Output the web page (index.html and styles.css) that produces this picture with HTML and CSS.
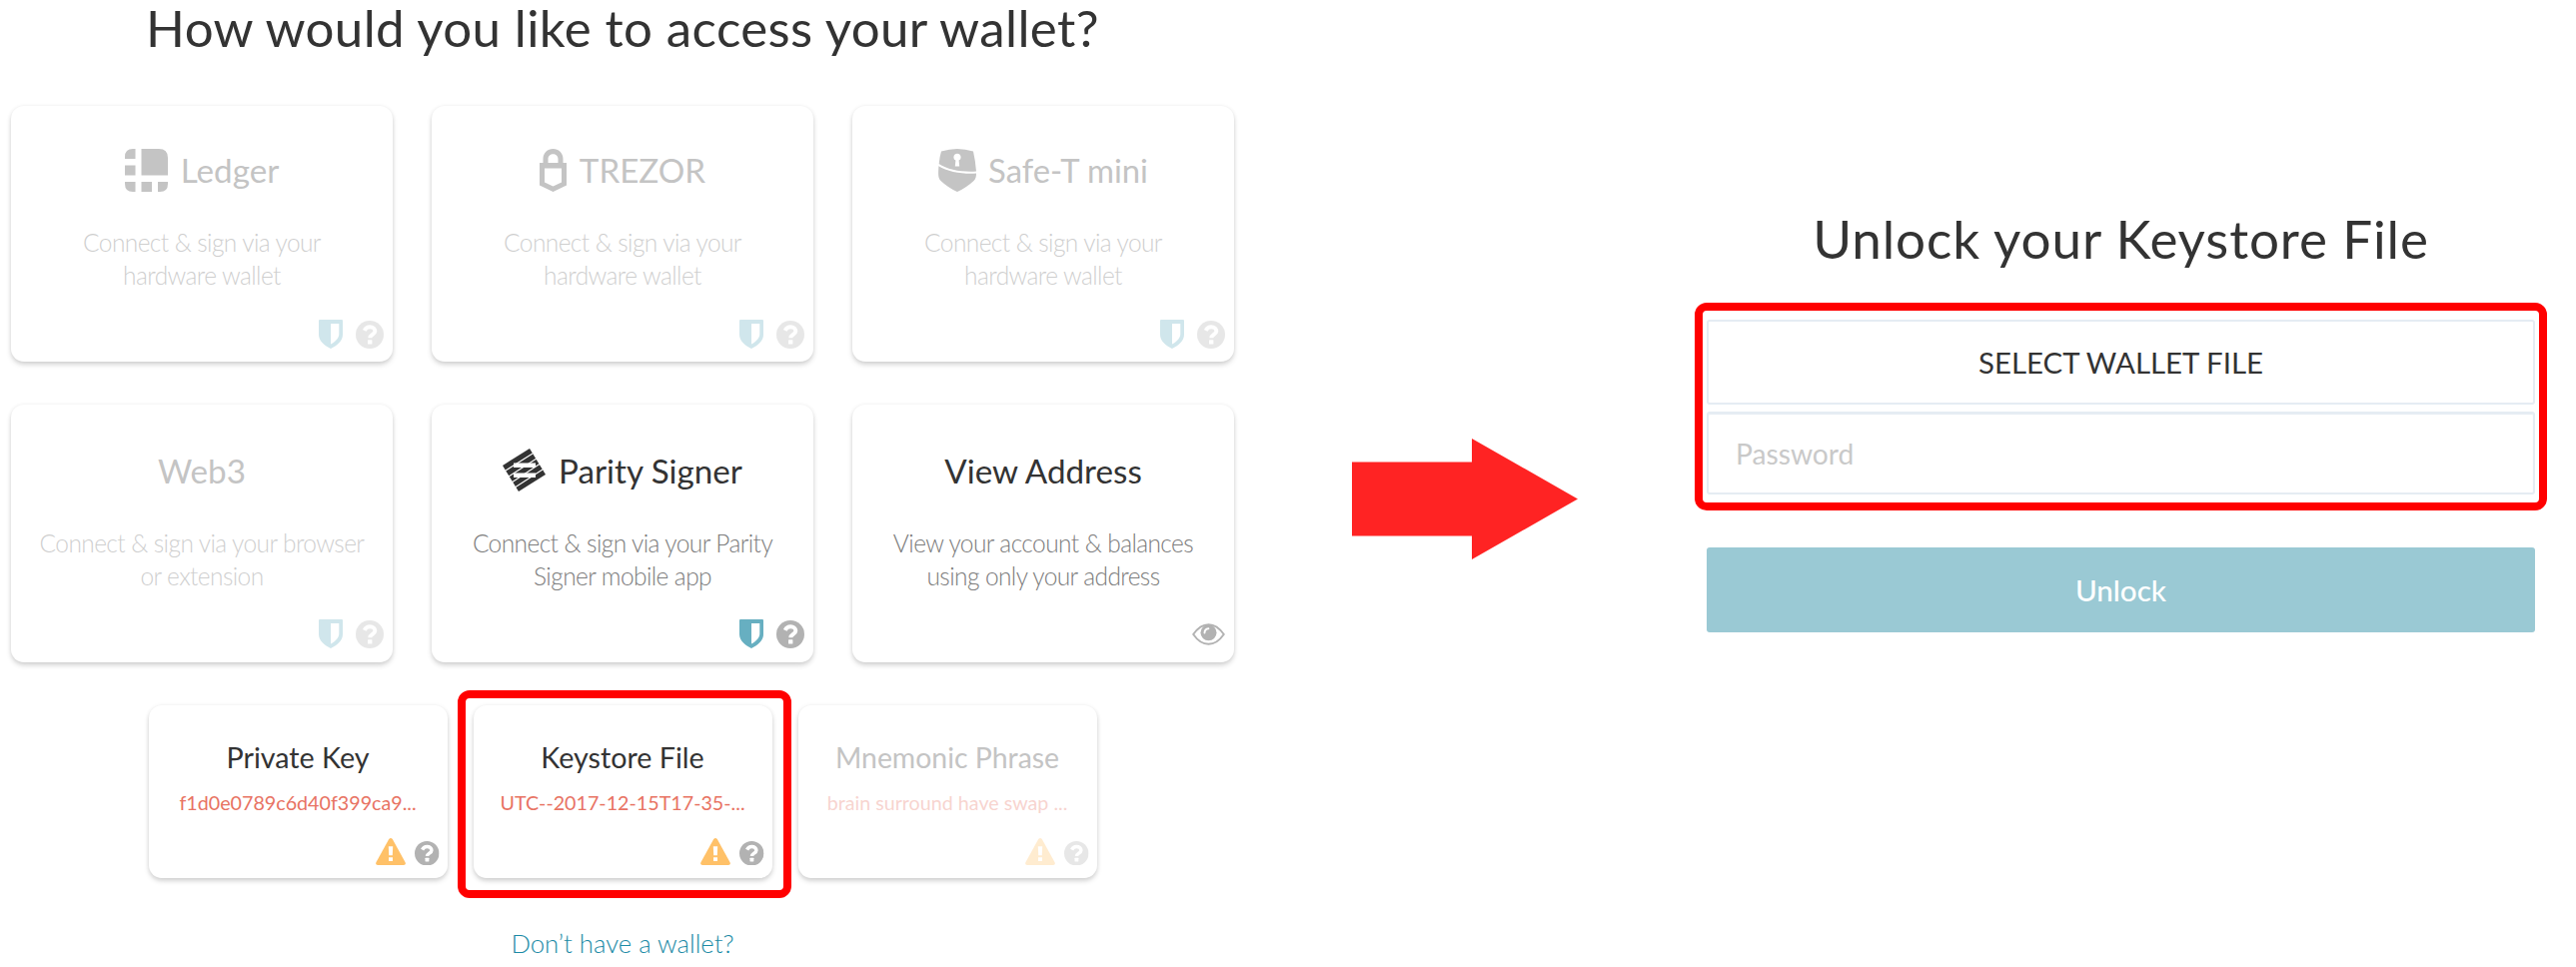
FILE: index.html
```html
<!DOCTYPE html>
<html lang="en">
<head>
<meta charset="utf-8">
<title>Access your wallet</title>
<link rel="stylesheet" href="styles.css">
</head>
<body>
<svg class="defs" aria-hidden="true">
  <symbol id="shield" viewBox="0 0 24 29"><path fill-rule="evenodd" d="M1 0H23Q24 0 24 1V15C24 21.500 18 26 12 29C6 26 0 21.500 0 15V1Q0 0 1 0ZM12 4V24.500C16 22.500 20.300 18.500 20.300 14.500V4Z"/></symbol>
  <symbol id="help" viewBox="0 0 28 28"><circle cx="14" cy="14" r="14"/><path d="M8.700 9.800C10 7.300 11.800 6.300 14.200 6.300C17.200 6.300 19.300 8 19.300 10.500C19.300 13.800 14.300 14 14.300 17.200" fill="none" stroke="#fff" stroke-width="4"/><rect x="12" y="19.200" width="4.400" height="4.200" rx=".5" fill="#fff"/></symbol>
  <symbol id="warn" viewBox="0 0 30 27"><path d="M13.200 1Q15 -1 16.800 1L29.600 24.300Q30.500 27 28 27H2Q-.5 27 .4 24.300Z"/><path d="M12.800 8.200h4.400l-.4 9h-3.600zM13 19.200h4v3.800h-4z" fill="#fff"/></symbol>
  <symbol id="eye" viewBox="0 0 33 22"><path d="M1.200 11Q8 1.200 16.500 1.200T31.800 11Q25 20.800 16.500 20.800T1.200 11Z" fill="none" stroke="currentColor" stroke-width="1.900"/><circle cx="16.500" cy="9.300" r="8"/><path d="M12.500 9.500Q12.700 5.600 16.400 5.300" fill="none" stroke="#fff" stroke-width="1.900" stroke-linecap="round"/></symbol>
</svg>
<main class="page">
  <section class="access">
    <h1 class="access-title">How would you like to access your wallet?</h1>
    <div class="row row-large">
      <article class="card disabled">
        <h2 class="card-title"><svg width="43" height="43" viewBox="0 0 43 43"><path d="M10.500 0V10H0V8Q0 0 8 0ZM16.500 0H34Q43 0 43 9V26.500H16.500ZM0 16.500H10.500V26.500H0ZM0 33H10.500V43H8Q0 43 0 35ZM16.500 33H27V43H16.500ZM33 33H43V35Q43 43 35 43H33Z"/></svg>Ledger</h2>
        <p class="card-text">Connect &amp; sign via your<br>hardware wallet</p>
        <div class="icons"><svg class="shield"><use href="#shield"/></svg><svg class="help"><use href="#help"/></svg></div>
      </article>
      <article class="card disabled">
        <h2 class="card-title"><svg width="27" height="43" viewBox="0 0 27 43"><path fill-rule="evenodd" d="M3.500 14V10C3.500 4 8 0 13.500 0S23.500 4 23.500 10V14H27V36.500L13.500 43L0 36.500V14ZM8.500 14H18.500V10C18.500 3.500 8.500 3.500 8.500 10ZM5 19.500V33.500L13.500 37.500L22 33.500V19.500Z"/></svg>TREZOR</h2>
        <p class="card-text">Connect &amp; sign via your<br>hardware wallet</p>
        <div class="icons"><svg class="shield"><use href="#shield"/></svg><svg class="help"><use href="#help"/></svg></div>
      </article>
      <article class="card disabled">
        <h2 class="card-title tight"><svg width="38" height="43" viewBox="0 0 38 43"><path fill-rule="evenodd" d="M3 2.500Q19 -2.500 35 2.500Q37 11 38 22.500C25 23.500 9 21 .7 15Q1.300 8 3 2.500ZM19 4.800A3.600 3.600 0 0 0 17.400 11.600L16.800 17.500H21.200L20.600 11.600A3.600 3.600 0 0 0 19 4.800Z"/><path d="M.4 17.200C9 23 25 25.500 38 24.600C38 28 37.500 30 35.500 32Q28 39 19 43Q10 39 2.500 32C-.5 29 0 25 .4 17.200Z"/></svg>Safe-T mini</h2>
        <p class="card-text">Connect &amp; sign via your<br>hardware wallet</p>
        <div class="icons"><svg class="shield"><use href="#shield"/></svg><svg class="help"><use href="#help"/></svg></div>
      </article>
    </div>
    <div class="row row-large row-second">
      <article class="card disabled">
        <h2 class="card-title">Web3</h2>
        <p class="card-text">Connect &amp; sign via your browser<br>or extension</p>
        <div class="icons"><svg class="shield"><use href="#shield"/></svg><svg class="help"><use href="#help"/></svg></div>
      </article>
      <article class="card">
        <h2 class="card-title"><svg class="parity" width="43" height="43" viewBox="0 0 43 43"><path d="M0 17L27 0L43 26L16 43Z"/><path d="M11 14.500H33V19H11ZM11 24.500H33V29H11Z" fill="#fff"/><path d="M3 22L30 5M6 28L34 10M9 34L37 15.500M13 38.500L40 21" stroke="#fff" stroke-width="1.100"/></svg>Parity Signer</h2>
        <p class="card-text">Connect &amp; sign via your Parity<br>Signer mobile app</p>
        <div class="icons"><svg class="shield"><use href="#shield"/></svg><svg class="help"><use href="#help"/></svg></div>
      </article>
      <article class="card">
        <h2 class="card-title">View Address</h2>
        <p class="card-text">View your account &amp; balances<br>using only your address</p>
        <div class="icons"><svg class="eye"><use href="#eye"/></svg></div>
      </article>
    </div>
    <div class="row row-small">
      <article class="card">
        <h2 class="card-title">Private Key</h2>
        <p class="card-text">f1d0e0789c6d40f399ca9...</p>
        <div class="icons"><svg class="warn"><use href="#warn"/></svg><svg class="help"><use href="#help"/></svg></div>
      </article>
      <article class="card marked">
        <h2 class="card-title">Keystore File</h2>
        <p class="card-text">UTC--2017-12-15T17-35-...</p>
        <div class="icons"><svg class="warn"><use href="#warn"/></svg><svg class="help"><use href="#help"/></svg></div>
      </article>
      <article class="card disabled">
        <h2 class="card-title">Mnemonic Phrase</h2>
        <p class="card-text">brain surround have swap ...</p>
        <div class="icons"><svg class="warn"><use href="#warn"/></svg><svg class="help"><use href="#help"/></svg></div>
      </article>
    </div>
    <a class="no-wallet">Don’t have a wallet?</a>
  </section>
  <svg class="arrow" width="226" height="121" viewBox="0 0 226 121"><path d="M0 23.500H120V0L226 60.500L120 121V97.500H0Z" fill="#ff2323"/></svg>
  <section class="unlock">
    <h1 class="unlock-title">Unlock your Keystore File</h1>
    <div class="fields">
      <button class="select-file">SELECT WALLET FILE</button>
      <input class="password" type="password" placeholder="Password">
    </div>
    <button class="submit">Unlock</button>
  </section>
</main>
</body>
</html>
```
FILE: styles.css
```css
* { box-sizing: border-box; margin: 0; padding: 0; }
body { width: 2578px; height: 968px; overflow: hidden; background: #fff; color: #333; font-family: Lato, sans-serif; }
h1, h2 { font-weight: 400; white-space: nowrap; }
svg { display: block; fill: currentColor; }
.defs { position: absolute; width: 0; height: 0; }
.page { display: flex; align-items: flex-start; }

.access { width: 1224px; margin-left: 11px; display: flex; flex-direction: column; align-items: center; }
.access-title { font-size: 51px; line-height: 56px; letter-spacing: .4px; margin-bottom: 50px; }
.row { display: flex; }
.row-large { gap: 39px; }
.row-large .card { width: 382px; height: 256px; padding-top: 43px; }
.row-second { margin-top: 43px; }
.row-second .card { height: 258px; padding-top: 45px; }
.row-second .icons { margin-bottom: 14px; }
.row-second .parity { margin-top: -1.500px; }
.row-small { gap: 26px; margin-top: 43px; }
.card { position: relative; display: flex; flex-direction: column; border-radius: 13px; background: #fff; box-shadow: 0 3px 5px rgba(0,0,0,.17), 0 0 4px rgba(0,0,0,.05); }
.card-title { display: flex; justify-content: center; gap: 13px; height: 43px; line-height: 43px; font-size: 33.2px; }
.card-title.tight { font-size: 32.800px; gap: 12px; }
.card-text { margin-top: 34px; text-align: center; white-space: nowrap; font-weight: 300; font-size: 24.5px; line-height: 33px; letter-spacing: -.59px; color: #7d7d7d; }
.icons { display: flex; align-items: flex-end; gap: 13px; margin: auto 9px 13px auto; color: #b2b2b2; }
.icons .shield { width: 24px; height: 29px; color: #67afc1; }
.icons .help { width: 28px; height: 28px; }
.icons .eye { width: 33px; height: 22px; margin-bottom: 3px; }
.icons .warn { width: 30px; height: 27px; color: #ffc168; }

.row-small .card { width: 299px; height: 173px; padding-top: 35px; }
.row-small .card-title { height: 35px; line-height: 35px; font-size: 28.700px; }
.row-small .disabled .card-title { font-size: 28.400px; }
.row-small .card-text { margin-top: 16px; font-size: 19.700px; line-height: 24px; font-weight: 400; letter-spacing: 0; color: #e87363; }
.row-small .icons { gap: 9px; margin-right: 8px; }
.row-small .help { width: 24.500px; height: 24.500px; }

.disabled .card-title { color: #c4c4c4; }
.disabled .icons { opacity: .3; }
.disabled .card-text { opacity: .37; }
.row-small .disabled .card-text { opacity: .3; }

.marked::after { content: ""; position: absolute; inset: -15px -19px -20px -16px; border: 8px solid #f00; border-radius: 12px; }
.no-wallet { margin-top: 49px; font-size: 25.700px; line-height: 32px; font-weight: 300; color: #1c8ba6; }

.arrow { flex: none; margin: 439px 0 0 118px; }
.unlock { width: 829px; margin: 207px 0 0 129px; display: flex; flex-direction: column; align-items: center; }
.unlock-title { font-size: 53px; line-height: 64px; letter-spacing: .88px; margin-bottom: 49px; }
.fields { position: relative; width: 100%; display: flex; flex-direction: column; gap: 7px; margin-bottom: 53px; }
.fields::after { content: ""; position: absolute; inset: -17px -12px -16px; border: 8px solid #f00; border-radius: 12px; pointer-events: none; }
.select-file { height: 85px; border: 2px solid #e5ecf3; border-radius: 3px; background: #fff; color: #333; font: 400 29.400px Lato, sans-serif; }
.password { height: 83px; padding-left: 27px; border: 2px solid #e5ecf3; border-radius: 3px; box-shadow: inset 0 1px 1px #e5ecf3; background: #fff; font: 400 28.200px Lato, sans-serif; }
.password::placeholder { color: #c9c9c9; opacity: 1; }
.submit { width: 100%; height: 85px; border: 0; border-radius: 3px; background: #9ac9d4; color: #fff; font: 500 29.600px Lato, sans-serif; }
```
